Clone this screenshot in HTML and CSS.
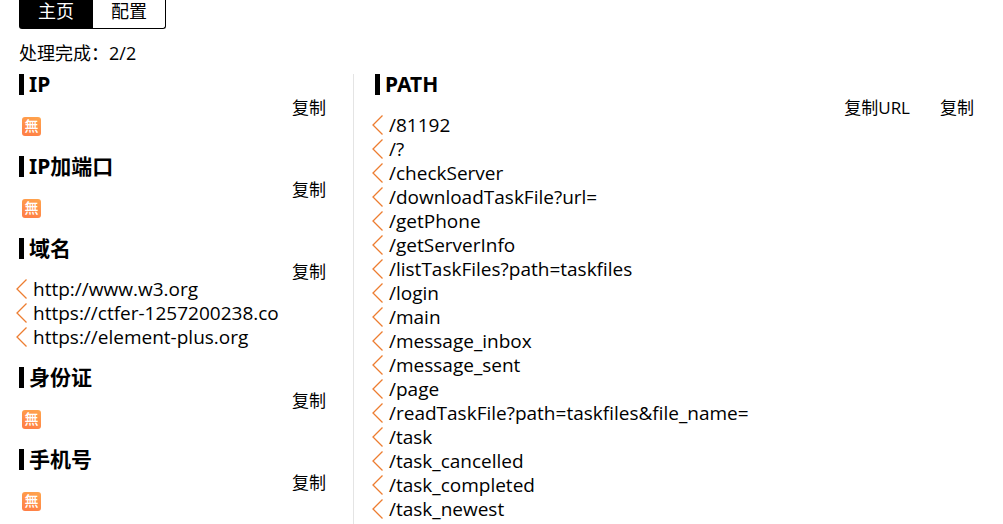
FILE: index.html
```html
<!DOCTYPE html>
<html lang="zh-CN">
<head>
<meta charset="utf-8">
<title>主页</title>
<link rel="stylesheet" href="styles.css">
</head>
<body>
<svg class="defs" aria-hidden="true"><symbol id="chevron" viewBox="0 0 12 20"><path d="M10.5 .5 1 10 10.500 19.500" fill="none" stroke="#ed7d31" stroke-width="1.3"/></symbol></svg>
<nav class="tabs">
  <button class="tab active" type="button">主页</button>
  <button class="tab" type="button">配置</button>
</nav>
<p class="status">处理完成：2/2</p>
<main class="columns">
  <div class="side">
    <section class="group">
      <h2 class="title">IP</h2>
      <div class="content"><span class="none">無</span></div>
      <div class="actions"><button class="copy" type="button">复制</button></div>
    </section>
    <section class="group">
      <h2 class="title">IP加端口</h2>
      <div class="content"><span class="none">無</span></div>
      <div class="actions"><button class="copy" type="button">复制</button></div>
    </section>
    <section class="group">
      <h2 class="title">域名</h2>
      <ul class="content list">
        <li class="item"><svg class="chevron"><use href="#chevron"/></svg>http://www.w3.org</li>
        <li class="item"><svg class="chevron"><use href="#chevron"/></svg>https://ctfer-1257200238.co</li>
        <li class="item"><svg class="chevron"><use href="#chevron"/></svg>https://element-plus.org</li>
      </ul>
      <div class="actions"><button class="copy" type="button">复制</button></div>
    </section>
    <section class="group">
      <h2 class="title">身份证</h2>
      <div class="content"><span class="none">無</span></div>
      <div class="actions"><button class="copy" type="button">复制</button></div>
    </section>
    <section class="group">
      <h2 class="title">手机号</h2>
      <div class="content"><span class="none">無</span></div>
      <div class="actions"><button class="copy" type="button">复制</button></div>
    </section>
  </div>
  <div class="paths">
    <section class="group">
      <h2 class="title">PATH</h2>
      <ul class="content list">
        <li class="item"><svg class="chevron"><use href="#chevron"/></svg>/81192</li>
        <li class="item"><svg class="chevron"><use href="#chevron"/></svg>/?</li>
        <li class="item"><svg class="chevron"><use href="#chevron"/></svg>/checkServer</li>
        <li class="item"><svg class="chevron"><use href="#chevron"/></svg>/downloadTaskFile?url=</li>
        <li class="item"><svg class="chevron"><use href="#chevron"/></svg>/getPhone</li>
        <li class="item"><svg class="chevron"><use href="#chevron"/></svg>/getServerInfo</li>
        <li class="item"><svg class="chevron"><use href="#chevron"/></svg>/listTaskFiles?path=taskfiles</li>
        <li class="item"><svg class="chevron"><use href="#chevron"/></svg>/login</li>
        <li class="item"><svg class="chevron"><use href="#chevron"/></svg>/main</li>
        <li class="item"><svg class="chevron"><use href="#chevron"/></svg>/message_inbox</li>
        <li class="item"><svg class="chevron"><use href="#chevron"/></svg>/message_sent</li>
        <li class="item"><svg class="chevron"><use href="#chevron"/></svg>/page</li>
        <li class="item"><svg class="chevron"><use href="#chevron"/></svg>/readTaskFile?path=taskfiles&amp;file_name=</li>
        <li class="item"><svg class="chevron"><use href="#chevron"/></svg>/task</li>
        <li class="item"><svg class="chevron"><use href="#chevron"/></svg>/task_cancelled</li>
        <li class="item"><svg class="chevron"><use href="#chevron"/></svg>/task_completed</li>
        <li class="item"><svg class="chevron"><use href="#chevron"/></svg>/task_newest</li>
      </ul>
      <div class="actions">
        <button class="copy" type="button">复制URL</button>
        <button class="copy" type="button">复制</button>
      </div>
    </section>
  </div>
</main>
</body>
</html>
```
FILE: styles.css
```css
* {
  box-sizing: border-box;
}

body {
  display: flex;
  flex-direction: column;
  min-height: 100vh;
  margin: 0;
  background: #fff;
  color: #000;
  font: 18px/24px "Open Sans", "Noto Sans CJK SC", sans-serif;
}

button {
  padding: 0;
  border: 0;
  background: none;
  color: inherit;
  font: inherit;
  cursor: pointer;
}

.defs {
  display: block;
  width: 0;
  height: 0;
}

.tabs {
  display: flex;
  align-self: flex-start;
  margin-left: 19px;
  border: 1px solid #000;
  border-top: 0;
  border-radius: 0 0 3px 3px;
}

.tab {
  padding: 0 18px 5px;
  line-height: 23px;
}

.tab.active {
  padding-right: 19px;
  background: #000;
  color: #fff;
}

.status {
  margin: 12px 19px 9px;
}

.columns {
  display: flex;
  flex: 1;
}

.side {
  flex: 0 0 354px;
  padding: 0 27px 0 19px;
  border-right: 1px solid #e4e4e4;
}

.paths {
  flex: 1;
  padding: 0 29px 0 21px;
}

.group {
  display: grid;
  grid-template-columns: 1fr auto;
  grid-template-rows: 21px auto;
  row-gap: 18px;
  margin-bottom: 18px;
}

.group:last-child {
  margin-bottom: 0;
}

.title {
  margin: 0;
  padding-left: 5px;
  border-left: 5px solid #000;
  font-family: "Noto Sans", "Noto Sans CJK SC", sans-serif;
  font-size: 21px;
  line-height: 21px;
}

.content {
  grid-row: 2;
  margin: 0;
}

.list {
  padding: 0;
  font-size: 19px;
  list-style: none;
}

.item {
  display: flex;
  align-items: center;
  gap: 5px;
  margin-left: -3px;
}

.chevron {
  flex: none;
  width: 12px;
  height: 20px;
}

.none {
  display: block;
  width: 19px;
  height: 19px;
  margin: 4px 3px 2px;
  border-radius: 3px;
  background: linear-gradient(200deg, #ffa64d, #ff7b45);
  color: #fff;
  font-size: 14px;
  font-weight: 500;
  line-height: 18px;
  text-align: center;
}

.actions {
  display: flex;
  grid-row: 1 / 3;
  grid-column: 2;
  gap: 30px;
  align-self: start;
  padding-top: 22px;
}

.copy {
  font-size: 17px;
}
```
